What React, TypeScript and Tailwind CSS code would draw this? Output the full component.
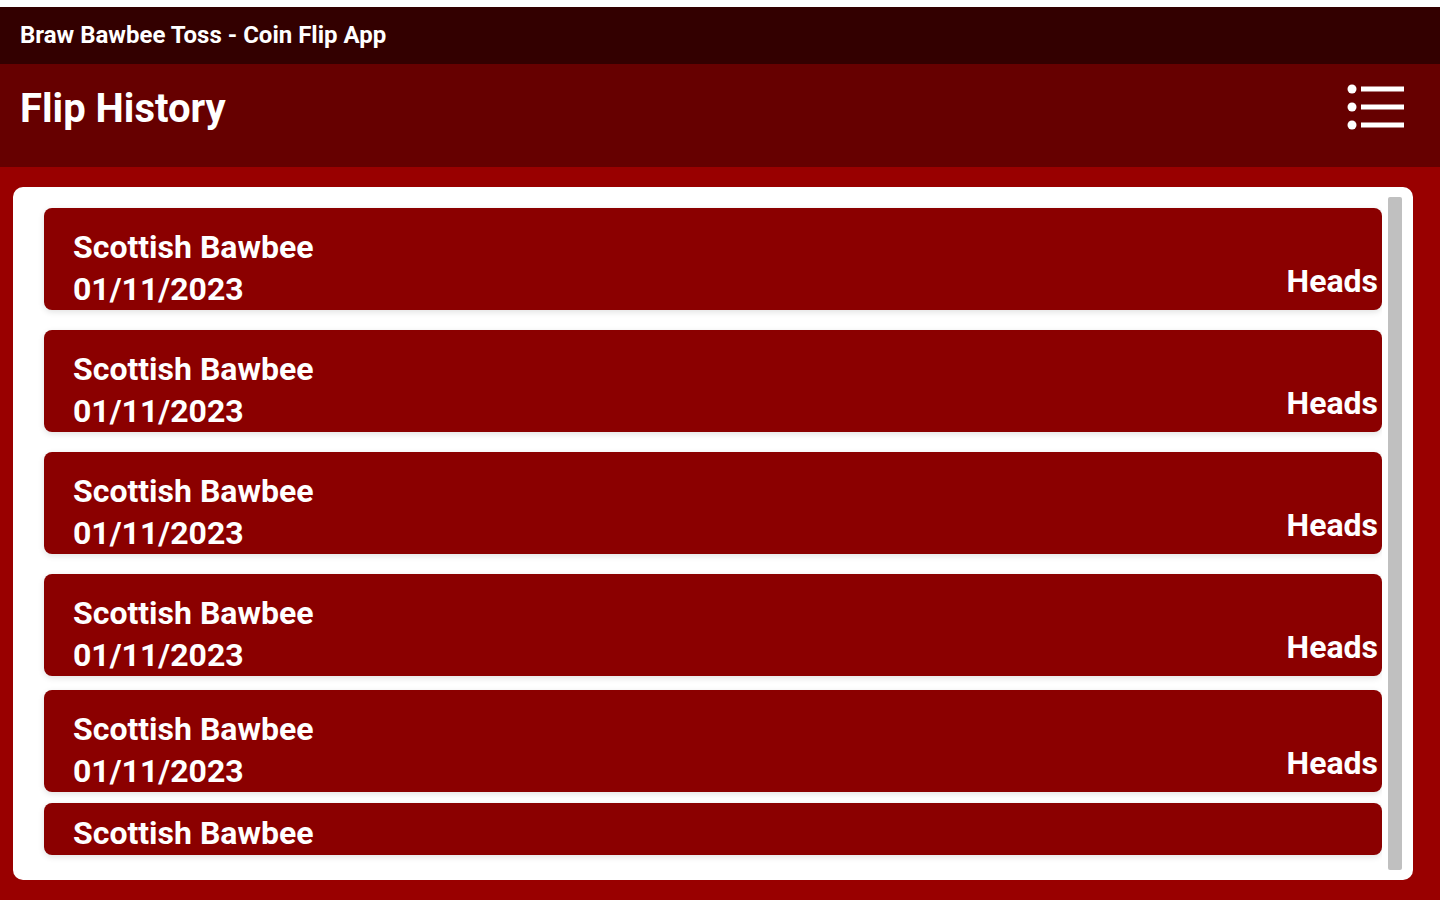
import { useState } from 'react';

const flips = [
  { coin: 'Scottish Bawbee', date: '01/11/2023', result: 'Heads', gap: 'mt-0' },
  { coin: 'Scottish Bawbee', date: '01/11/2023', result: 'Heads', gap: 'mt-[20px]' },
  { coin: 'Scottish Bawbee', date: '01/11/2023', result: 'Heads', gap: 'mt-[20px]' },
  { coin: 'Scottish Bawbee', date: '01/11/2023', result: 'Heads', gap: 'mt-[20px]' },
  { coin: 'Scottish Bawbee', date: '01/11/2023', result: 'Heads', gap: 'mt-[14px]' },
];

const MenuIcon = () => (
  <svg width="60" height="48" viewBox="0 0 60 48" className="text-white" fill="currentColor">
    <circle cx="6" cy="5" r="4.5" />
    <circle cx="6" cy="23" r="4.5" />
    <circle cx="6" cy="41" r="4.5" />
    <rect x="15" y="2.5" width="43" height="5" />
    <rect x="15" y="20.5" width="43" height="5" />
    <rect x="15" y="38.5" width="43" height="5" />
  </svg>
);

const FlipCard = ({ coin, date, result, gap }: { coin: string; date: string; result: string; gap: string }) => (
  <div className={`${gap} h-[102px] shrink-0 bg-[#8b0000] rounded-[8px] shadow-[0_2px_6px_rgba(0,0,0,0.12)] flex items-start justify-between pl-[29px] pr-[4px] pt-[18px] text-white`}>
    <div className="text-[32px] leading-[42px] font-bold">
      <div>{coin}</div>
      <div>{date}</div>
    </div>
    <div className="text-[32px] leading-[42px] font-bold mt-[34px]">{result}</div>
  </div>
);

export default function App() {
  const [menuOpen, setMenuOpen] = useState(false);

  return (
    <div className="w-[1440px] h-[900px] bg-white pt-[7px] flex flex-col overflow-hidden" style={{ fontFamily: 'Roboto, "Liberation Sans", sans-serif' }}>
      <div className="h-[57px] shrink-0 bg-[#330000] flex items-center px-[20px] pb-[2px]">
        <span className="text-white text-[24px] font-bold">Braw Bawbee Toss - Coin Flip App</span>
      </div>

      <header className="h-[103px] shrink-0 bg-[#660000] flex items-center justify-between pl-[20px] pr-[34px] pb-[14px]">
        <h1 className="text-white text-[40px] font-bold">Flip History</h1>
        <button onClick={() => setMenuOpen(!menuOpen)} className="-mt-[2px]">
          <MenuIcon />
        </button>
      </header>

      <main className="flex-1 bg-[#990000] pl-[13px] pr-[27px] pt-[20px] pb-[20px] min-h-0 flex">
        <div className="flex-1 bg-white rounded-[10px] flex min-h-0 overflow-hidden">
          <div className="flex-1 flex flex-col pl-[31px] pt-[21px] overflow-hidden">
            {flips.map((flip, index) => (
              <FlipCard key={index} {...flip} />
            ))}
            <div className="mt-[11px] h-[52px] shrink-0 bg-[#8b0000] rounded-[8px] shadow-[0_2px_6px_rgba(0,0,0,0.12)] pl-[29px] pt-[9px] text-white">
              <div className="text-[32px] leading-[42px] font-bold">Scottish Bawbee</div>
            </div>
          </div>
          <div className="w-[14px] my-[10px] ml-[6px] mr-[11px] bg-[#c0c0c0] rounded-[2px]" />
        </div>
      </main>
    </div>
  );
}
